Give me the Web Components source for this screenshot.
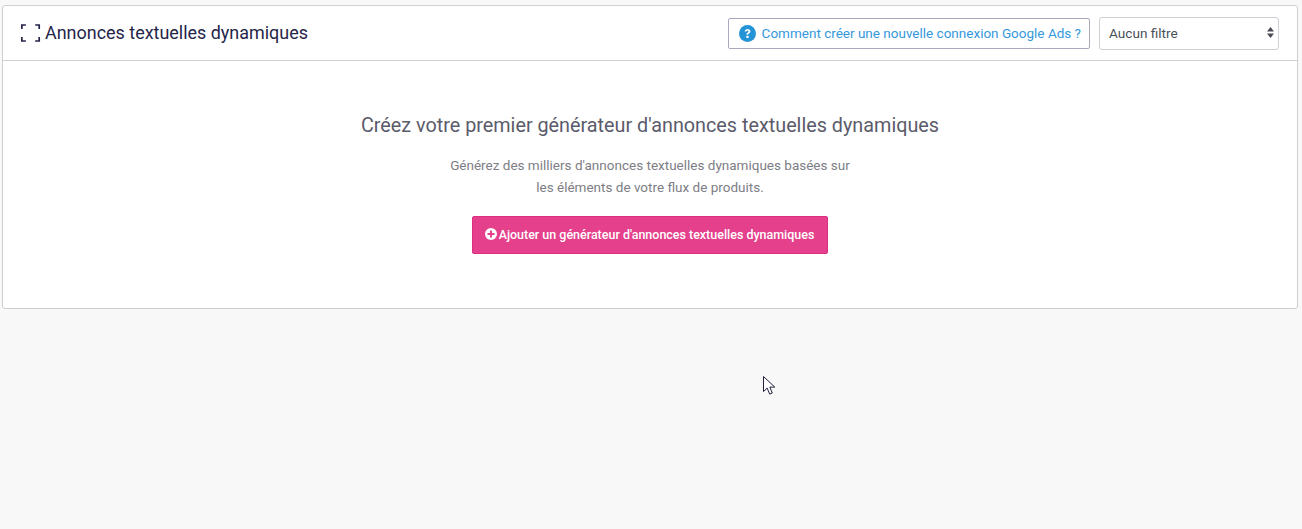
<!DOCTYPE html>
<html lang="fr">
<head>
<meta charset="utf-8">
<title>Annonces textuelles dynamiques</title>
<style>
  html, body { height: 100%; }
  body {
    margin: 0;
    background: #f8f8f8;
    font-family: Roboto, "Liberation Sans", sans-serif;
    overflow: hidden;
  }
</style>
</head>
<body>
<dyn-page>
  <dyn-card>
    <span slot="title">Annonces textuelles dynamiques</span>
    <help-link slot="actions">Comment créer une nouvelle connexion Google Ads ?</help-link>
    <filter-select slot="actions">Aucun filtre</filter-select>
    <empty-state>
      <span slot="heading">Créez votre premier générateur d'annonces textuelles dynamiques</span>
      Générez des milliers d'annonces textuelles dynamiques basées sur<br>les éléments de votre flux de produits.
      <add-button slot="action">Ajouter un générateur d'annonces textuelles dynamiques</add-button>
    </empty-state>
  </dyn-card>
  <mouse-cursor></mouse-cursor>
</dyn-page>

<script>
class DynPage extends HTMLElement {
  constructor() {
    super();
    this.attachShadow({ mode: "open" });
    this.shadowRoot.innerHTML = `
    <style>
      :host { display: block; position: relative; height: 529px; padding: 5px 4px 0 2px; box-sizing: border-box; }
    </style>
    <slot></slot>`;
  }
}

class DynCard extends HTMLElement {
  constructor() {
    super();
    this.attachShadow({ mode: "open" });
    this.shadowRoot.innerHTML = `
    <style>
      :host {
        display: block;
        background: #fff;
        border: 1px solid #cfcfcf;
        border-radius: 3px;
        box-sizing: border-box;
        height: 304px;
      }
      header {
        display: flex;
        align-items: center;
        height: 55px;
        box-sizing: border-box;
        border-bottom: 1px solid #cfcfcf;
        padding: 0 18px 0 18px;
      }
      svg { width: 20px; height: 20px; margin-right: 4px; flex: none; }
      h2 { margin: 0 0 2px; font-size: 17.95px; font-weight: 400; color: #25254a; flex: 1; }
      .actions { display: flex; align-items: center; gap: 9px; }
    </style>
    <header>
      <svg viewBox="0 0 20 20" fill="none" stroke="#25254a" stroke-width="1.700">
        <path d="M.85 6V2h4M14.200 2h4v4M18.200 14v4h-4M4.850 18h-4v-4"/>
      </svg>
      <h2><slot name="title"></slot></h2>
      <div class="actions"><slot name="actions"></slot></div>
    </header>
    <slot></slot>`;
  }
}

class HelpLink extends HTMLElement {
  constructor() {
    super();
    this.attachShadow({ mode: "open" });
    this.shadowRoot.innerHTML = `
    <style>
      :host {
        display: flex;
        align-items: center;
        height: 31px;
        box-sizing: border-box;
        padding: 0 8px 0 10px;
        border: 1px solid #a9a9bd;
        border-radius: 2px;
        color: #3498db;
        font-size: 13.5px;
        white-space: nowrap;
      }
      svg { width: 17px; height: 17px; margin-right: 6px; flex: none; }
    </style>
    <svg viewBox="0 0 17 17">
      <circle cx="8.5" cy="8.5" r="8.5" fill="#2494d6"/>
      <path d="M5.7 6.5c.1-1.7 1.3-2.6 2.9-2.6 1.6 0 2.8 1 2.8 2.3 0 1-.5 1.6-1.4 2.2-.7.4-.9.7-.9 1.4H7.500c0-1.200.3-1.800 1.200-2.400.6-.4.8-.7.800-1.100 0-.5-.4-.8-.9-.8-.6 0-1 .4-1.100 1z" fill="#fff"/>
      <rect x="7.400" y="10.800" width="2.200" height="2.200" rx=".4" fill="#fff"/>
    </svg>
    <slot></slot>`;
  }
}

class FilterSelect extends HTMLElement {
  constructor() {
    super();
    this.attachShadow({ mode: "open" });
    this.shadowRoot.innerHTML = `
    <style>
      :host {
        display: flex;
        align-items: center;
        justify-content: space-between;
        width: 180px;
        height: 33px;
        box-sizing: border-box;
        padding: 0 4px 0 9px;
        background: #fff;
        border: 1px solid #cfcfd6;
        border-radius: 3px;
        color: #495057;
        font-size: 13.6px;
      }
      svg { width: 7px; height: 11px; margin-bottom: 1px; }
    </style>
    <slot></slot>
    <svg viewBox="0 0 7 11" fill="#4a4a55"><path d="M3.500 0L7 4.600H0zM3.500 11L0 6.400h7z"/></svg>`;
  }
}

class EmptyState extends HTMLElement {
  constructor() {
    super();
    this.attachShadow({ mode: "open" });
    this.shadowRoot.innerHTML = `
    <style>
      :host { display: flex; flex-direction: column; align-items: center; padding-top: 53px; text-align: center; }
      h3 { margin: 0 0 16px; font-size: 19.8px; line-height: 24px; font-weight: 400; color: #5b5b6b; }
      p { margin: 0 0 18px; font-size: 13.5px; line-height: 22px; color: #7d7d85; }
    </style>
    <h3><slot name="heading"></slot></h3>
    <p><slot></slot></p>
    <slot name="action"></slot>`;
  }
}

class AddButton extends HTMLElement {
  constructor() {
    super();
    this.attachShadow({ mode: "open" });
    this.shadowRoot.innerHTML = `
    <style>
      :host {
        display: flex;
        align-items: center;
        height: 38px;
        box-sizing: border-box;
        padding: 0 13px 2px 12px;
        background: #e4408c;
        border: 1px solid #dc2f80;
        border-radius: 2px;
        color: #fff;
        font-size: 12.48px;
        font-weight: 500;
        white-space: nowrap;
      }
      svg { width: 12px; height: 12px; margin-right: 2px; flex: none; }
    </style>
    <svg viewBox="0 0 12 12">
      <circle cx="6" cy="6" r="6" fill="#fff"/>
      <path d="M5 2.500h2V5h2.500v2H7v2.500H5V7H2.500V5H5z" fill="#e4408c"/>
    </svg>
    <slot></slot>`;
  }
}

class MouseCursor extends HTMLElement {
  constructor() {
    super();
    this.attachShadow({ mode: "open" });
    this.shadowRoot.innerHTML = `
    <style>
      :host { position: absolute; left: 763px; top: 376px; width: 13px; height: 20px; }
      svg { display: block; }
    </style>
    <svg width="13" height="20" viewBox="0 0 13 20">
      <path d="M.5.500v15l3.700-3.400 2.500 6 2.600-1.100-2.500-5.900h5z" fill="#fff" stroke="#1f1f3d" stroke-width="1"/>
    </svg>`;
  }
}

customElements.define("dyn-page", DynPage);
customElements.define("dyn-card", DynCard);
customElements.define("help-link", HelpLink);
customElements.define("filter-select", FilterSelect);
customElements.define("empty-state", EmptyState);
customElements.define("add-button", AddButton);
customElements.define("mouse-cursor", MouseCursor);
</script>
</body>
</html>
